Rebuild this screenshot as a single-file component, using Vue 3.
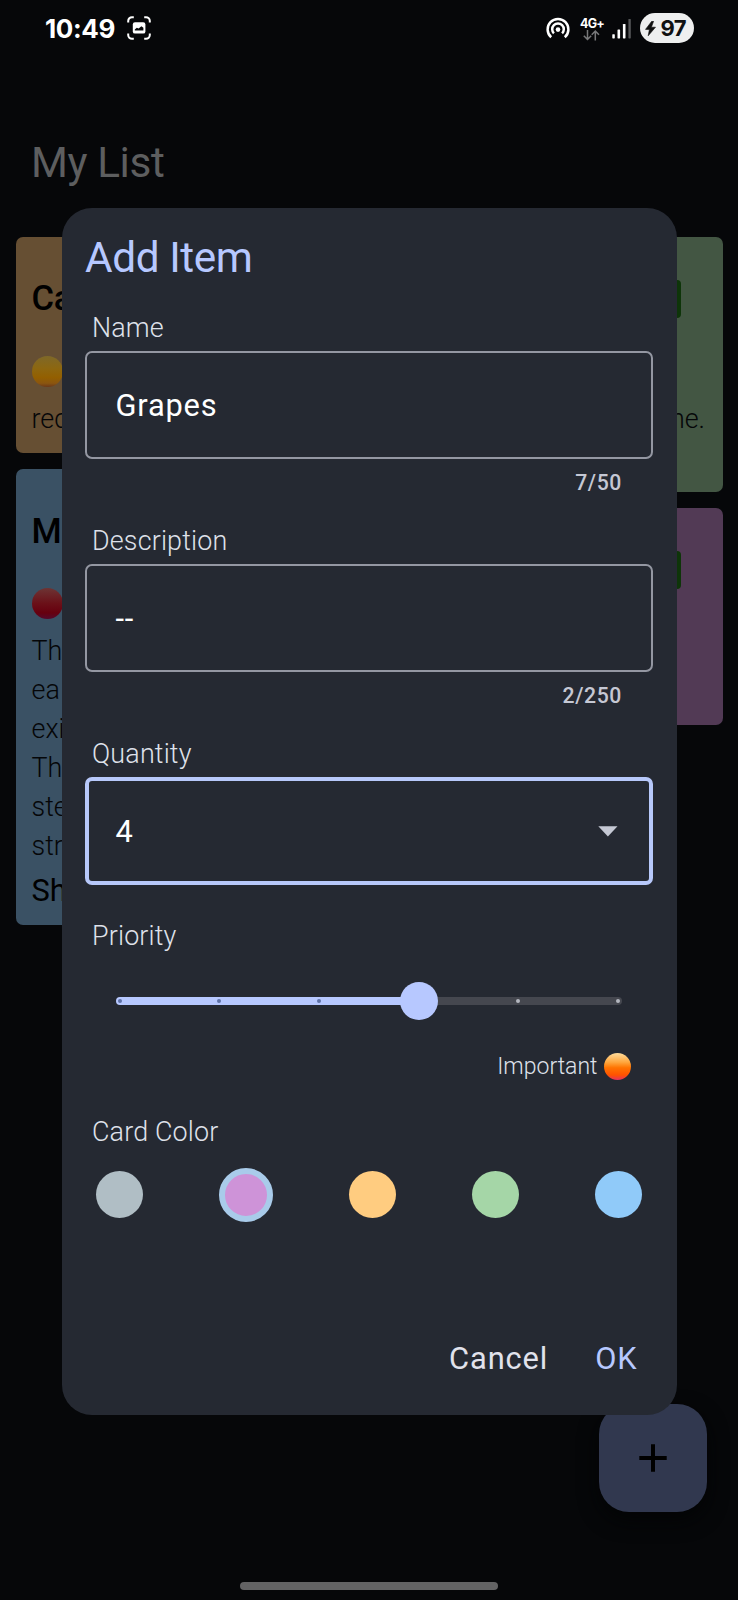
<script setup>
const swatches = [
  { name: 'grey' },
  { name: 'purple', selected: true },
  { name: 'orange' },
  { name: 'green' },
  { name: 'blue' },
]
const lines = ['Th', 'ea', 'exi', 'Th', 'ste', 'str']
const ticks = [0, 1, 2, 3, 4, 5]
const level = 3
</script>

<template>
  <div class="screen">
    <header class="status">
      <span class="time">10:49</span>
      <svg class="shot" width="24" height="24" viewBox="0 0 24 24" fill="none">
        <path d="M1.2 6.5V5A3.8 3.8 0 0 1 5 1.2h1.8M17.2 1.2H19A3.8 3.8 0 0 1 22.8 5v1.5M22.8 17.5V19a3.8 3.8 0 0 1-3.8 3.8h-1.8M6.8 22.8H5A3.8 3.8 0 0 1 1.2 19v-1.5" stroke="#fff" stroke-width="2" />
        <rect x="5.8" y="6.2" width="12.6" height="11.4" rx="2.2" fill="#fff" />
        <path d="M7.8 14.6v-1.2l2-1.7 1.8.9 2.8-2.4 2 1.6v2.8z" fill="#07080a" />
      </svg>
      <div class="spacer"></div>
      <svg class="hotspot" width="24" height="23" viewBox="0 0 24 23" fill="none" stroke="#fff" stroke-width="2.5">
        <path d="M5.2 20.2A10.4 10.4 0 1 1 18.8 20.2" />
        <path d="M7.9 16.4A5.8 5.8 0 1 1 16.1 16.4" />
        <circle cx="12" cy="12.6" r="2.3" fill="#fff" stroke="none" />
      </svg>
      <div class="net">
        <span>4G+</span>
        <svg width="17" height="11" viewBox="0 0 17 11" fill="none" stroke="#77787a" stroke-width="1.5">
          <path d="M4.5 0v9.3M.8 5.8l3.7 3.7 3.7-3.7M12.3 10.5V1.2M8.7 4.8l3.6-3.7 3.7 3.7" />
        </svg>
      </div>
      <svg class="signal" width="20" height="20" viewBox="0 0 20 20">
        <rect x="0.3" y="15.2" width="2.5" height="4.2" rx=".6" fill="#fff" />
        <rect x="5.5" y="10.4" width="2.6" height="9" rx=".6" fill="#fff" />
        <rect x="10.9" y="5" width="2.6" height="14.4" rx=".6" fill="#fff" />
        <rect x="16.4" y="0" width="2.4" height="19.4" rx=".6" fill="#555658" />
      </svg>
      <div class="battery">
        <svg width="11" height="15" viewBox="0 0 11 15"><path d="M6.7.3.5 8.4h3.9L3.2 14.8l7.3-8.6H6.4L8.6.3z" fill="#111" stroke="#111" stroke-width=".6" /></svg>
        <span>97</span>
      </div>
    </header>

    <h1 class="heading">My List</h1>

    <main class="board">
      <div class="column">
        <article class="card amber">
          <h2>Ca</h2>
          <i class="ball yellow"></i>
          <p>rec</p>
        </article>
        <article class="card azure">
          <h2>M</h2>
          <i class="ball red"></i>
          <p v-for="(line, i) in lines" :key="i">{{ line }}</p>
          <strong>Sh</strong>
        </article>
      </div>
      <div class="column">
        <article class="card moss">
          <i class="badge"></i>
          <p class="end">ne.</p>
        </article>
        <article class="card plum">
          <i class="badge"></i>
        </article>
      </div>
    </main>

    <button class="fab" aria-label="Add">
      <svg width="28" height="28" viewBox="0 0 28 28"><path d="M14 .3v27.4M.3 14h27.4" stroke="#000" stroke-width="4" /></svg>
    </button>

    <section class="dialog">
      <h2 class="title">Add Item</h2>

      <label class="label first">Name</label>
      <div class="field">Grapes</div>
      <div class="counter">7/50</div>

      <label class="label next">Description</label>
      <div class="field">--</div>
      <div class="counter">2/250</div>

      <label class="label next">Quantity</label>
      <div class="field focused">
        <span>4</span>
        <svg width="20" height="11" viewBox="0 0 20 11"><path d="M.3.3h19.2L9.9 10.5z" fill="#c5c8d4" /></svg>
      </div>

      <label class="label priority">Priority</label>
      <div class="slider">
        <div class="track">
          <i v-for="t in ticks" :key="t" class="tick" :class="{ on: t < level, thumb: t === level }"></i>
        </div>
      </div>
      <div class="importance"><span>Important</span><i class="ball orange"></i></div>

      <label class="label colors">Card Color</label>
      <div class="swatches">
        <i v-for="s in swatches" :key="s.name" class="swatch" :class="[s.name, { selected: s.selected }]"></i>
      </div>

      <footer class="actions">
        <button class="cancel">Cancel</button>
        <button class="ok">OK</button>
      </footer>
    </section>

    <div class="handle"></div>
  </div>
</template>

<style>
body { margin: 0; background: #060709; }
</style>

<style scoped>
* { box-sizing: border-box; }
h1, h2, p { margin: 0; font-weight: 400; }
i { display: block; flex: none; }
svg { display: block; flex: none; }
button { border: 0; padding: 0; background: none; font: inherit; letter-spacing: inherit; }
.screen {
  position: relative;
  width: 738px;
  height: 1600px;
  overflow: hidden;
  background: #060709;
  font-family: Roboto, "Liberation Sans", sans-serif;
}
.status {
  display: flex;
  align-items: center;
  height: 56px;
  padding: 0 44px 0 45px;
  color: #fff;
  font-family: Inter, sans-serif;
}
.time { width: 82px; padding-top: 1px; font-size: 26px; font-weight: 700; line-height: 30px; letter-spacing: -.4px; white-space: nowrap; }
.spacer { flex: 1; }
.hotspot { margin-right: 10px; }
.net { width: 22px; margin: 2px 10px 0 0; }
.net span { display: block; font-size: 12.5px; font-weight: 700; line-height: 11px; letter-spacing: -.8px; white-space: nowrap; }
.net svg { margin: 1px 0 0 3px; }
.signal { margin: 1px 8px 0 0; }
.battery {
  display: flex;
  align-items: center;
  width: 54px;
  height: 30px;
  padding-left: 5px;
  gap: 4.5px;
  border-radius: 15px;
  background: #eeefef;
  color: #111;
  font-size: 22px;
  font-weight: 700;
  letter-spacing: -.6px;
}
.heading { height: 56px; margin: 82px 0 0 31px; font-size: 42.3px; line-height: 50px; letter-spacing: -.4px; color: #5d5e5f; }
.board { display: flex; gap: 16px; padding: 0 15px 0 16px; margin-top: 42.5px; }
.column { display: flex; flex: 1; flex-direction: column; gap: 16px; }
.card { padding: 0 15.5px; border-radius: 7px; color: #050608; }
.card h2 { padding-top: 40.5px; font-size: 34.5px; font-weight: 500; line-height: 42px; letter-spacing: -.3px; color: #000; }
.card .ball { margin: 36.5px 0 13px; }
.card p { font-size: 26.9px; font-weight: 300; line-height: 39px; }
.card strong { display: block; margin-top: 5px; font-size: 30.8px; font-weight: 400; line-height: 40px; color: #000; }
.amber { height: 216.5px; background: #664f33; }
.azure { height: 456px; background: #3a5164; }
.moss { height: 255.5px; background: #435643; }
.plum { height: 217px; background: #523a55; }
.badge { width: 120px; height: 38px; margin: 43px 26.5px 0 auto; border-radius: 4px; background: #0e3509; }
.moss .badge { margin-bottom: 82px; }
.end { text-align: right; margin-right: 2.5px; }
.ball { width: 31px; height: 31px; border-radius: 50%; }
.yellow { background: linear-gradient(#7e6829, #8d6710 40%, #935f00 70%, #8a5510 88%, #6c3819); }
.red { background: linear-gradient(#6d3434, #6b1018 50%, #66000f 80%, #54092c); }
.orange { width: 27px; height: 27px; background: linear-gradient(#ffdc9c, #ffa53b 35%, #ff7300 55%, #ff5200 82%, #e53160); }
.fab {
  position: absolute;
  left: 599px;
  top: 1404px;
  display: grid;
  place-items: center;
  width: 108px;
  height: 108px;
  border-radius: 30px;
  background: #31384f;
  box-shadow: 0 8px 20px #030405;
}
.dialog {
  position: absolute;
  left: 61.5px;
  top: 208px;
  display: flex;
  flex-direction: column;
  width: 615px;
  height: 1207px;
  padding: 25px 23.5px 0;
  border-radius: 30px;
  background: #252932;
  color: #fff;
}
.title { font-size: 42.3px; line-height: 50px; letter-spacing: -.4px; color: #b7c8ff; }
.label { display: block; margin-left: 7px; font-size: 26.9px; font-weight: 300; line-height: 30px; letter-spacing: .16px; color: #dfe1ea; }
.first { margin-top: 30px; }
.next { margin-top: 31px; }
.priority { margin-top: 36px; }
.colors { margin-top: 35.5px; }
.field {
  display: flex;
  align-items: center;
  justify-content: space-between;
  flex: none;
  height: 108px;
  margin-top: 8px;
  padding: 0 28px 0 28.5px;
  border: 2px solid #9497a2;
  border-radius: 7px;
  font-size: 30.8px;
  letter-spacing: .8px;
}
.counter { margin-top: 12px; padding-right: 31px; font-size: 21.2px; font-weight: 500; line-height: 24px; letter-spacing: .6px; text-align: right; color: #c5c8d4; }
.focused { border: 4px solid #b7c8fa; padding: 0 31px 0 26.5px; }
.slider { margin: 31px 31px 0 30.5px; height: 38px; display: flex; align-items: center; }
.track {
  display: flex;
  flex: 1;
  align-items: center;
  justify-content: space-between;
  height: 8px;
  padding: 0 2px;
  border-radius: 4px;
  background: linear-gradient(90deg, #b7c8ff 60%, #45474f 60%);
}
.tick { width: 4px; height: 4px; border-radius: 50%; background: #b4b6bf; }
.tick.on { background: #5e71a7; }
.tick.thumb { width: 38px; height: 38px; margin: 0 -17px; background: #b7c8ff; }
.importance { display: flex; align-items: center; justify-content: flex-end; gap: 6.5px; margin: 31.5px 22px 0 0; font-size: 23px; font-weight: 300; line-height: 30px; color: #dfe1ea; }
.swatches { display: flex; align-items: center; justify-content: space-between; height: 54px; margin: 20.5px 11px 0 11px; }
.swatch { width: 47px; height: 47px; border-radius: 50%; }
.selected { width: 54px; height: 54px; border: 6.5px solid #a9cbea; }
.grey { background: #b0bec5; }
.purple { background: #ce93d8; }
.orange.swatch { width: 47px; height: 47px; background: #ffcc80; }
.green { background: #a5d6a7; }
.blue { background: #90caf9; }
.actions { display: flex; justify-content: flex-end; gap: 47px; margin-top: 117px; padding-right: 15.5px; font-size: 30.8px; line-height: 40px; letter-spacing: .9px; }
.cancel { color: #e1e2ec; }
.ok { color: #b7c8ff; }
.handle { position: absolute; left: 240px; top: 1582px; width: 258px; height: 8px; border-radius: 4px; background: #636364; }
</style>
